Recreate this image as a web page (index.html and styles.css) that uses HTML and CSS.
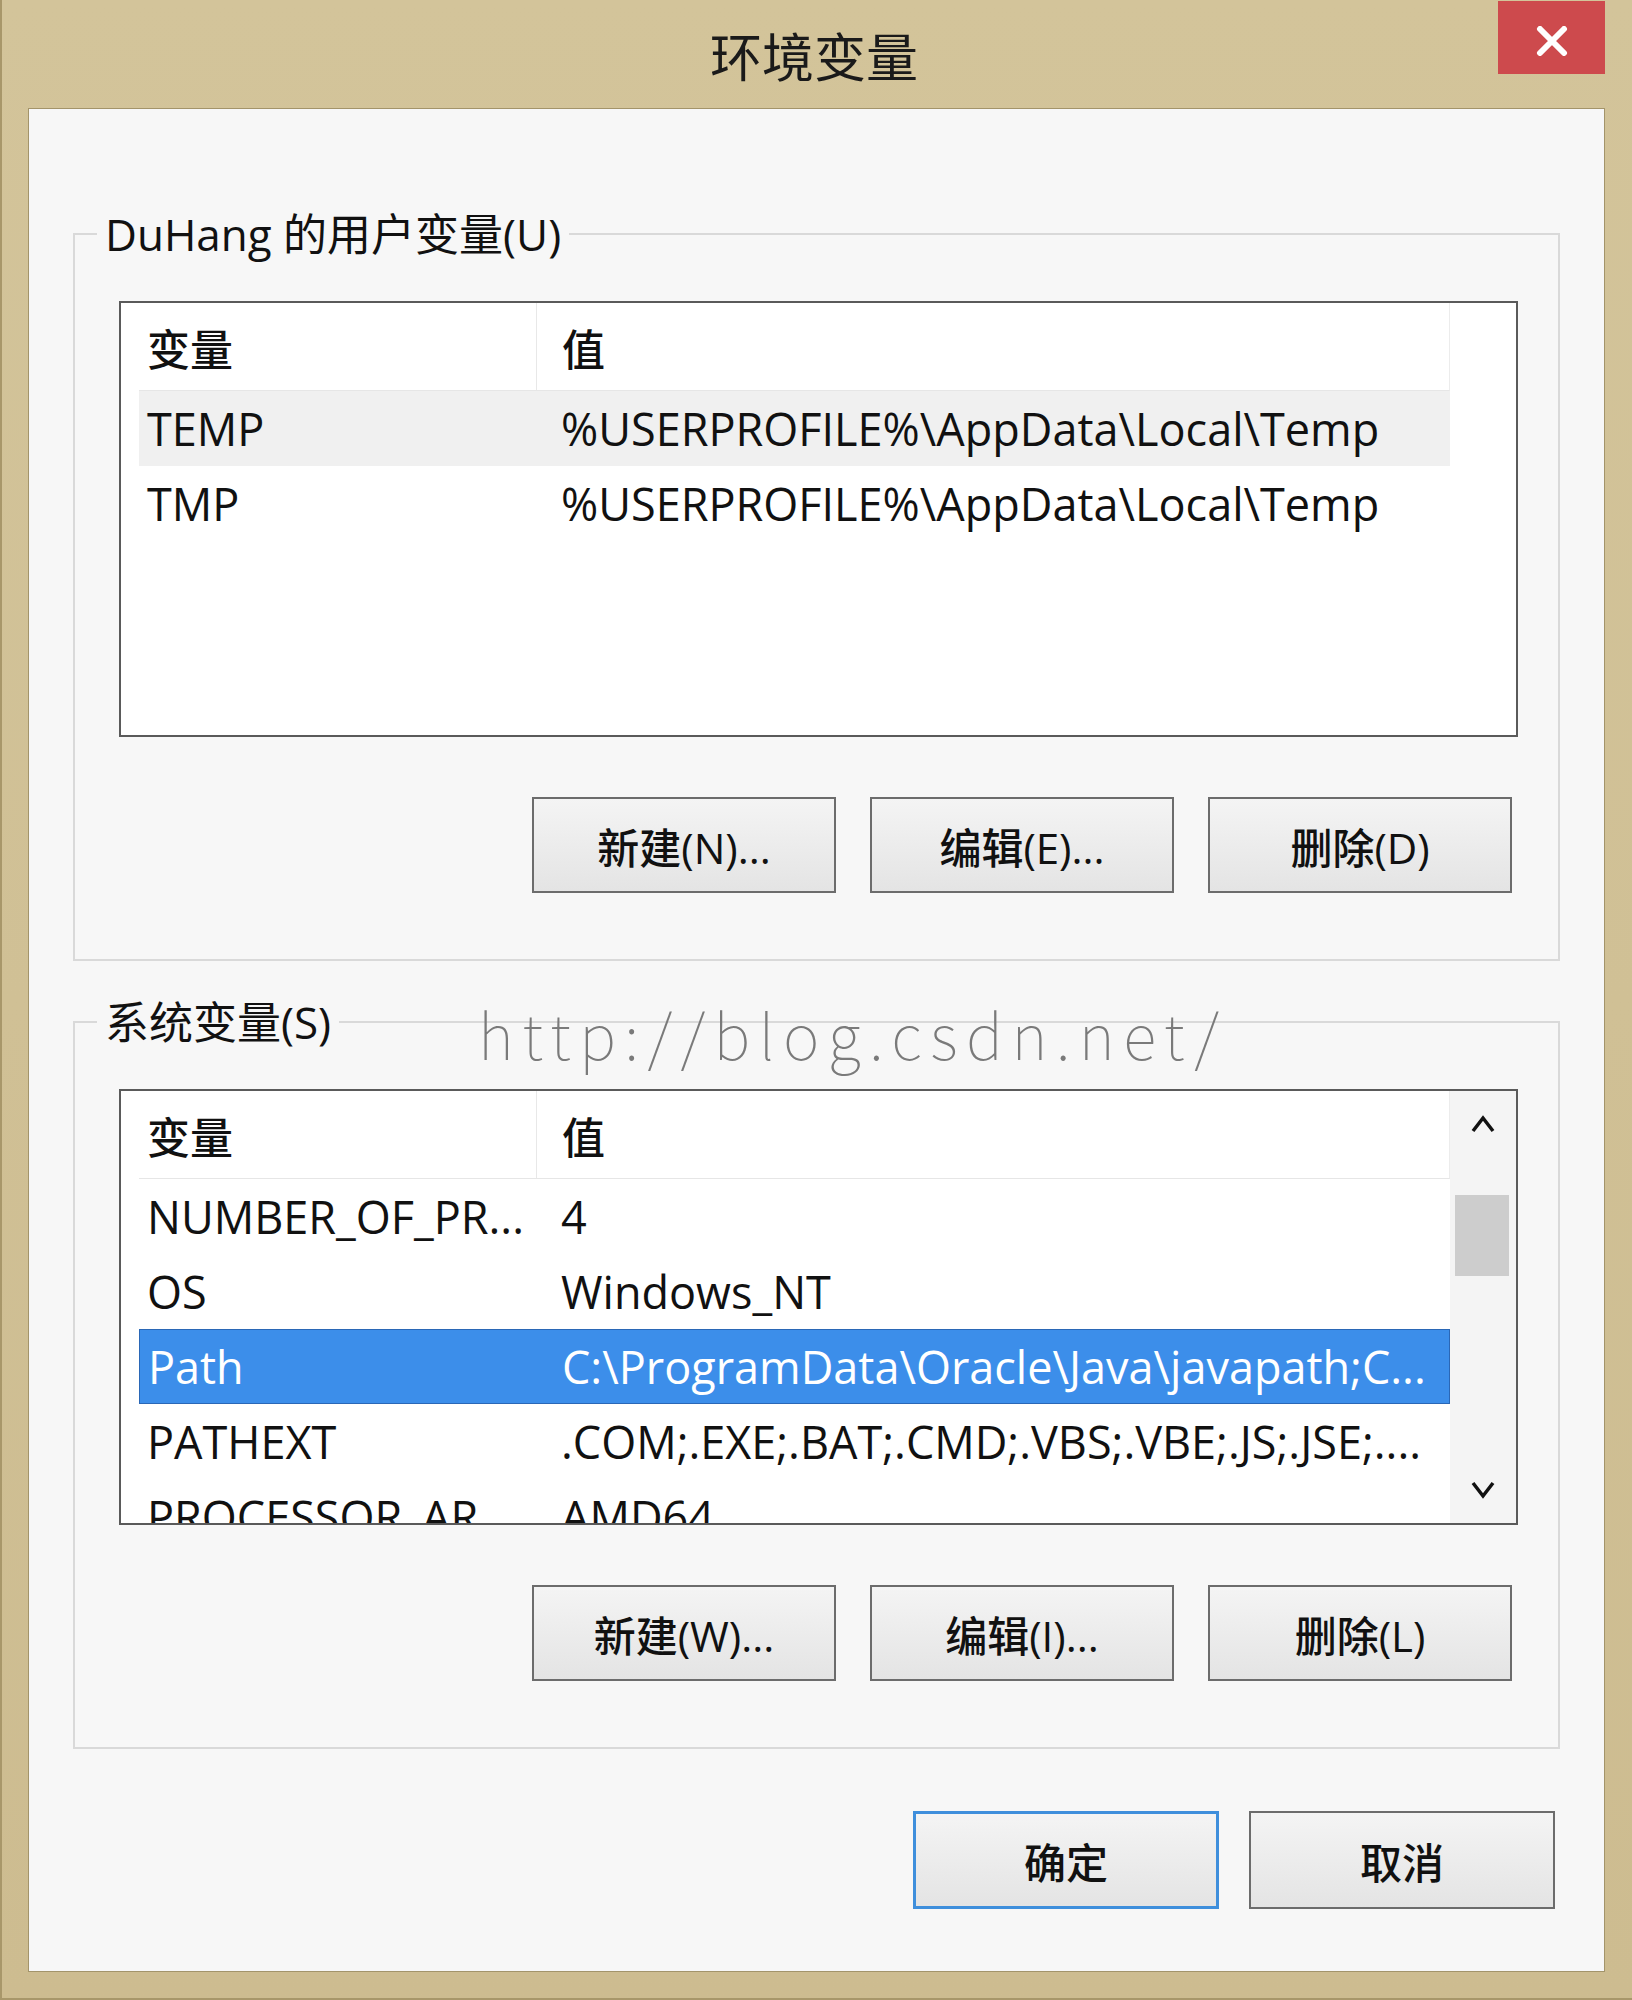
FILE: index.html
```html
<!DOCTYPE html>
<html lang="zh-CN">
<head>
    <meta charset="UTF-8">
    <meta name="viewport" content="width=device-width, initial-scale=1.0">
    <title>环境变量</title>
    <link rel="stylesheet" href="styles.css">
</head>
<body>
    <div class="window">
        <div class="titlebar">
            <span class="title">环境变量</span>
            <button class="close-btn" aria-label="关闭">
                <svg width="34" height="30" viewBox="0 0 34 30">
                    <path d="M5 3 L29 27 M29 3 L5 27" stroke="#fff" stroke-width="6" stroke-linecap="round" fill="none"/>
                </svg>
            </button>
        </div>

        <div class="client">
            <!-- User variables -->
            <fieldset class="group">
                <legend>DuHang 的用户变量(U)</legend>
                <div class="listview">
                    <div class="lv-main">
                        <div class="lv-header">
                            <div class="cell-name">变量</div>
                            <div class="cell-value">值</div>
                        </div>
                        <div class="lv-row row-hover">
                            <div class="cell-name">TEMP</div>
                            <div class="cell-value">%USERPROFILE%\AppData\Local\Temp</div>
                        </div>
                        <div class="lv-row">
                            <div class="cell-name">TMP</div>
                            <div class="cell-value">%USERPROFILE%\AppData\Local\Temp</div>
                        </div>
                    </div>
                    <div class="lv-spacer"></div>
                </div>
                <div class="btn-row">
                    <button class="btn">新建(N)...</button>
                    <button class="btn">编辑(E)...</button>
                    <button class="btn">删除(D)</button>
                </div>
            </fieldset>

            <!-- System variables -->
            <fieldset class="group group-system">
                <legend>系统变量(S)</legend>
                <div class="listview">
                    <div class="lv-main">
                        <div class="lv-header">
                            <div class="cell-name">变量</div>
                            <div class="cell-value">值</div>
                        </div>
                        <div class="lv-row">
                            <div class="cell-name">NUMBER_OF_PR...</div>
                            <div class="cell-value">4</div>
                        </div>
                        <div class="lv-row">
                            <div class="cell-name">OS</div>
                            <div class="cell-value">Windows_NT</div>
                        </div>
                        <div class="lv-row row-selected">
                            <div class="cell-name">Path</div>
                            <div class="cell-value">C:\ProgramData\Oracle\Java\javapath;C...</div>
                        </div>
                        <div class="lv-row">
                            <div class="cell-name">PATHEXT</div>
                            <div class="cell-value">.COM;.EXE;.BAT;.CMD;.VBS;.VBE;.JS;.JSE;....</div>
                        </div>
                        <div class="lv-row">
                            <div class="cell-name">PROCESSOR_AR...</div>
                            <div class="cell-value">AMD64</div>
                        </div>
                    </div>
                    <div class="scrollbar">
                        <div class="sb-arrow">
                            <svg width="26" height="20" viewBox="0 0 26 20"><path d="M3 17 L13 4 L23 17" stroke="#111" stroke-width="3.5" fill="none"/></svg>
                        </div>
                        <div class="sb-track"><div class="sb-thumb"></div></div>
                        <div class="sb-arrow">
                            <svg width="26" height="20" viewBox="0 0 26 20"><path d="M3 3 L13 16 L23 3" stroke="#111" stroke-width="3.5" fill="none"/></svg>
                        </div>
                    </div>
                </div>
                <div class="btn-row">
                    <button class="btn">新建(W)...</button>
                    <button class="btn">编辑(I)...</button>
                    <button class="btn">删除(L)</button>
                </div>
            </fieldset>

            <div class="dialog-buttons">
                <button class="btn btn-dialog btn-default">确定</button>
                <button class="btn btn-dialog">取消</button>
            </div>
        </div>

        <div class="watermark">http://blog.csdn.net/</div>
    </div>
</body>
</html>
```

FILE: styles.css
```css
body {
    margin: 0;
    background: #cfbf94;
    font-family: "Open Sans", "Noto Sans CJK SC", sans-serif;
    color: #111;
}

.window {
    position: relative;
    width: 1632px;
    height: 2000px;
    background: linear-gradient(#d3c49a, #cdbc90);
    box-sizing: border-box;
    border-left: 2px solid #a8976a;
    border-bottom: 2px solid #a8976a;
}

.titlebar {
    height: 108px;
    display: grid;
    grid-template-columns: 1fr auto 1fr;
}

.title {
    grid-column: 2;
    align-self: center;
    font-family: "Noto Sans CJK SC", sans-serif;
    font-size: 52px;
    line-height: 1;
    color: #1a1a1a;
    margin-top: 2px;
    margin-right: 6px;
}

.close-btn {
    grid-column: 3;
    justify-self: end;
    align-self: start;
    width: 107px;
    height: 73px;
    margin-right: 27px;
    margin-top: 1px;
    background: #cd4a4d;
    border: none;
    padding: 0;
    display: flex;
    align-items: center;
    justify-content: center;
    padding-top: 6px;
}

.client {
    margin: 0 27px 0 26px;
    height: 1864px;
    box-sizing: border-box;
    background: #f7f7f7;
    border: 1px solid #a3946a;
    overflow: hidden;
}

/* group boxes */
.group {
    margin: 97px 44px 0 44px;
    padding: 39px 40px 66px 44px;
    border: 2px solid #d9d9d9;
    min-width: 0;
}

.group-system {
    margin-top: 33px;
}

.group legend {
    margin-left: -22px;
    padding: 0 8px;
    font-size: 44px;
    line-height: 56px;
    color: #111;
}

/* list views */
.listview {
    height: 436px;
    box-sizing: border-box;
    border: 2px solid #5a5a5a;
    background: #fff;
    display: flex;
}

.lv-main {
    flex: 1;
    padding-left: 18px;
    overflow: hidden;
    font-size: 45px;
}

.lv-spacer,
.scrollbar {
    width: 66px;
    flex-shrink: 0;
}

.lv-header {
    height: 87px;
    display: flex;
    border-bottom: 1px solid #e6e6e6;
    border-right: 1px solid #ececec;
    font-family: "Noto Sans CJK SC", sans-serif;
    font-size: 43px;
    font-weight: 500;
}

.lv-header .cell-name,
.lv-header .cell-value {
    display: flex;
    align-items: center;
}

.lv-header .cell-name {
    border-right: 1px solid #e8e8e8;
}

.lv-header .cell-value {
    padding-left: 25px;
}

.cell-name {
    width: 398px;
    flex-shrink: 0;
    box-sizing: border-box;
    padding-left: 8px;
    white-space: nowrap;
}

.cell-value {
    flex: 1;
    padding-left: 24px;
    white-space: nowrap;
    overflow: hidden;
}

.lv-row {
    height: 75px;
    display: flex;
    align-items: center;
    box-sizing: border-box;
}

.row-hover {
    background: #f0f0f0;
}

.row-selected {
    background: #3c8eea;
    color: #fff;
    border: 1px solid #2a67b6;
}

/* scroll bar */
.scrollbar {
    display: flex;
    flex-direction: column;
    background: #f4f4f4;
}

.sb-arrow {
    height: 66px;
    display: flex;
    align-items: center;
    justify-content: center;
}

.sb-track {
    flex: 1;
    padding-top: 38px;
}

.sb-thumb {
    height: 81px;
    margin: 0 7px 0 5px;
    background: #cdcdcd;
}

/* buttons */
.btn-row {
    display: flex;
    justify-content: flex-end;
    gap: 34px;
    margin-top: 60px;
    padding-right: 6px;
}

.btn {
    width: 304px;
    height: 96px;
    box-sizing: border-box;
    border: 2px solid #6c6c6c;
    background: linear-gradient(#f4f4f4, #e4e4e4);
    font-family: "Open Sans", "Noto Sans CJK SC", sans-serif;
    font-size: 42px;
    font-weight: 500;
    color: #111;
    padding: 0;
}

.dialog-buttons {
    display: flex;
    justify-content: flex-end;
    gap: 30px;
    margin-top: 62px;
    padding-right: 49px;
}

.btn-dialog {
    width: 306px;
    height: 98px;
}

.btn-default {
    border: 3px solid #3f8fdc;
}

/* csdn watermark over the group border */
.watermark {
    position: absolute;
    left: 476px;
    top: 988px;
    font-family: "Noto Sans CJK SC", sans-serif;
    font-weight: 100;
    font-size: 62px;
    letter-spacing: 8.5px;
    color: #7a7a7a;
    pointer-events: none;
}
```
